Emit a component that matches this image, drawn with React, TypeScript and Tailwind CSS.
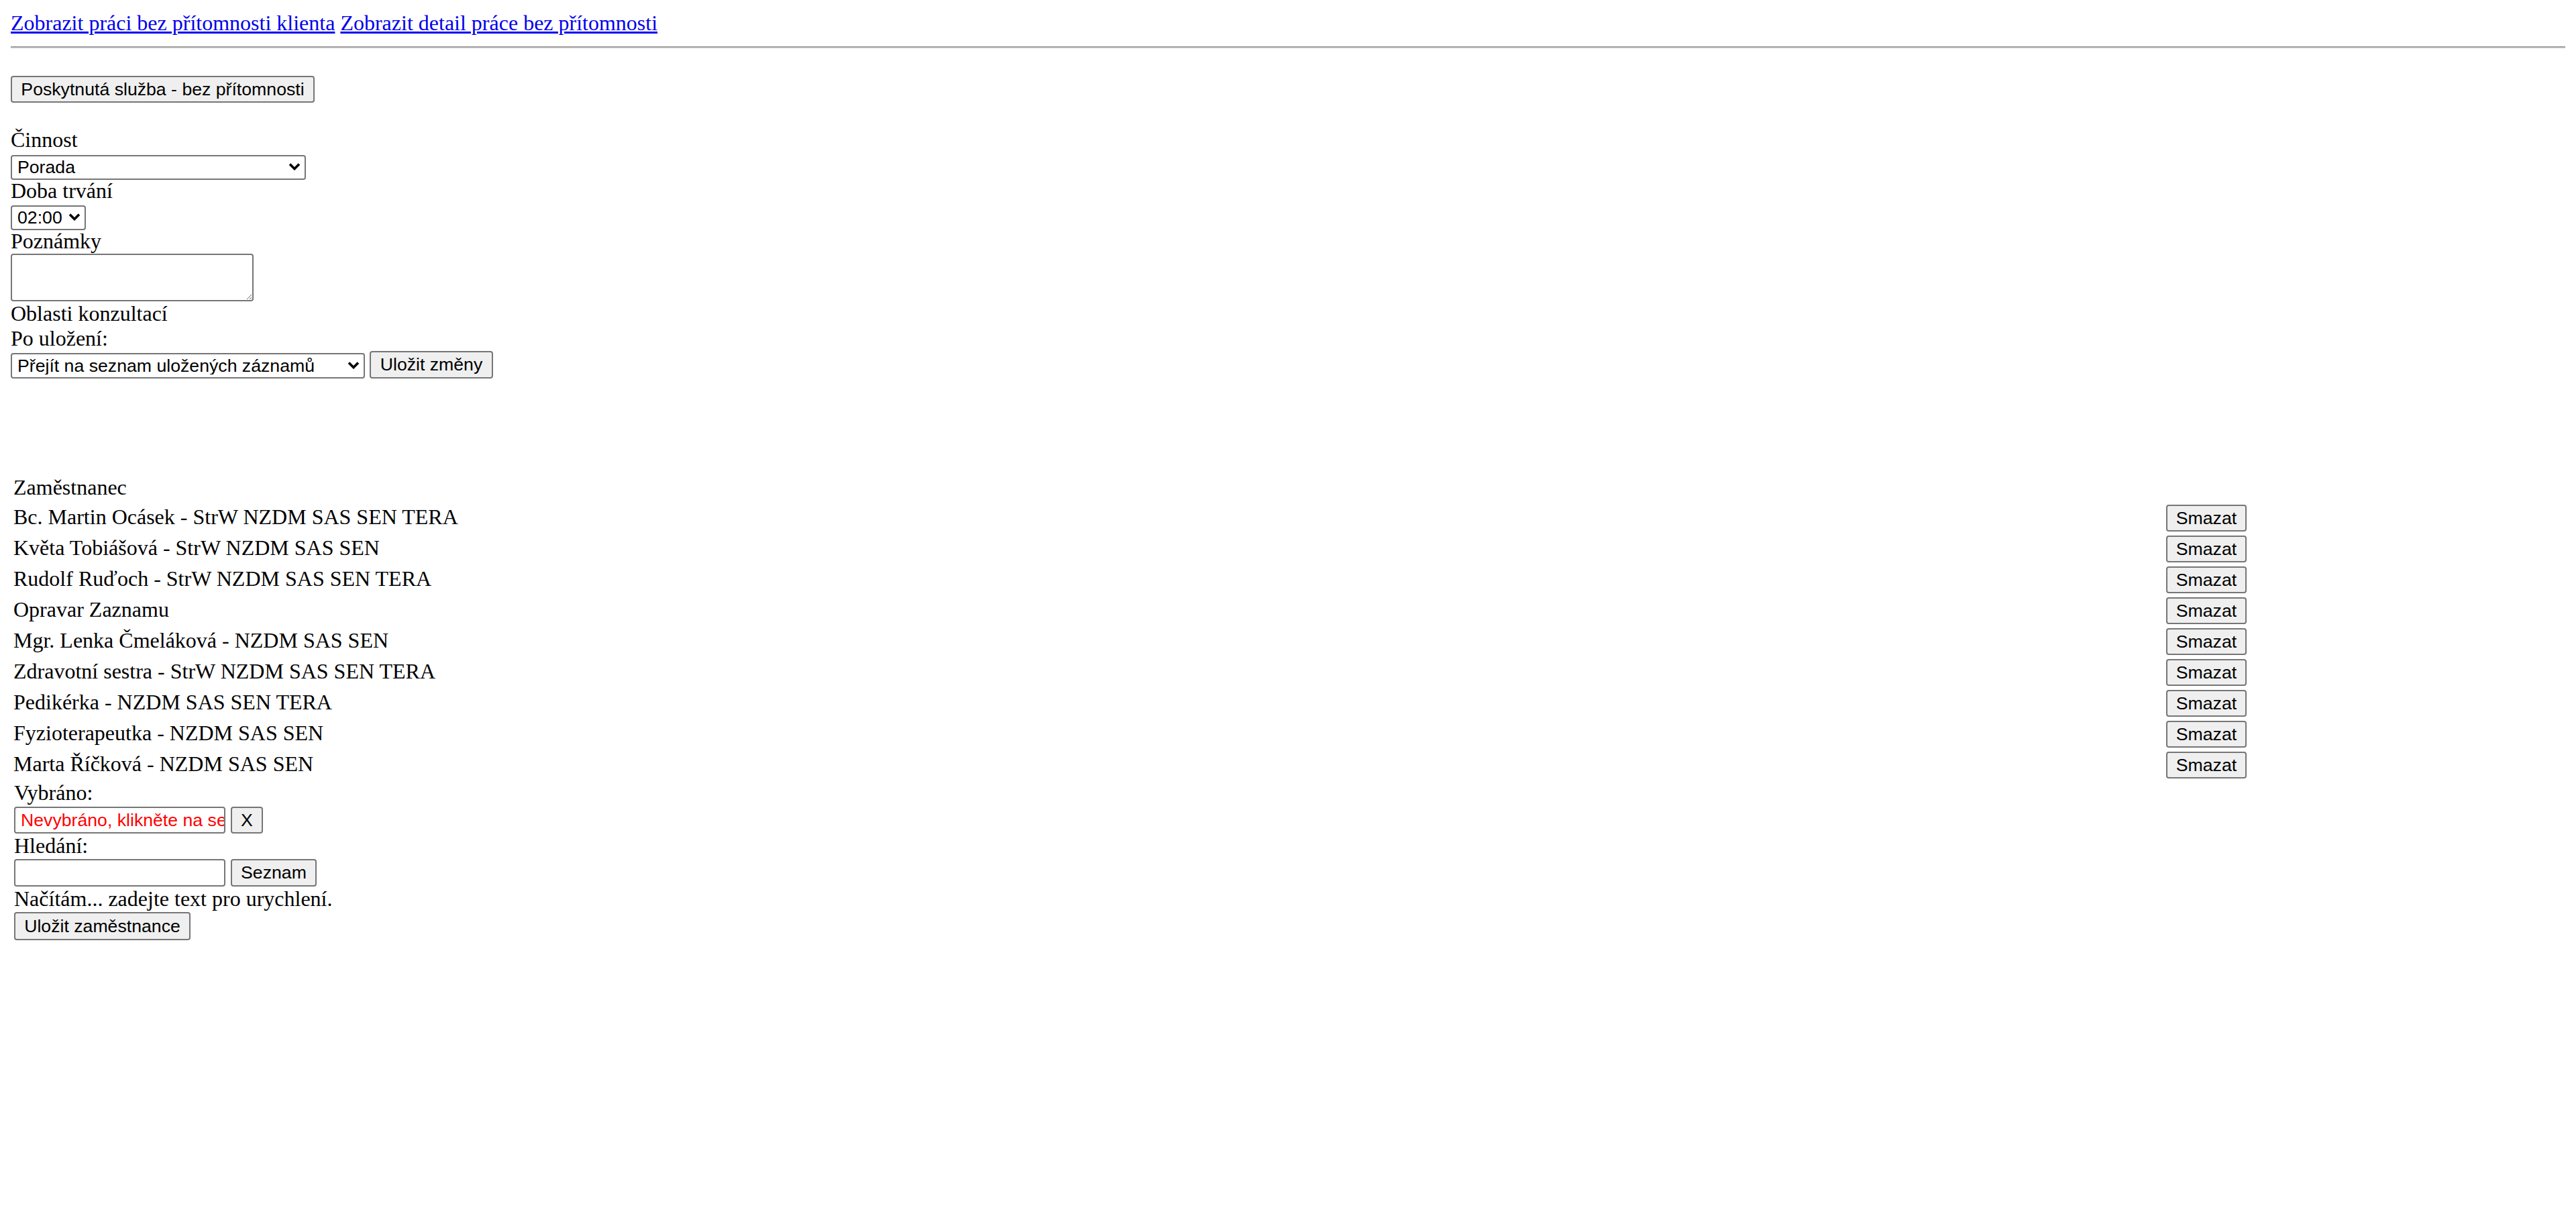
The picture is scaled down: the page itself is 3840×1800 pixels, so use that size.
import React from "react";

const employees = [
  "Bc. Martin Ocásek - StrW NZDM SAS SEN TERA",
  "Květa Tobiášová - StrW NZDM SAS SEN",
  "Rudolf Ruďoch - StrW NZDM SAS SEN TERA",
  "Opravar Zaznamu",
  "Mgr. Lenka Čmeláková - NZDM SAS SEN",
  "Zdravotní sestra - StrW NZDM SAS SEN TERA",
  "Pedikérka - NZDM SAS SEN TERA",
  "Fyzioterapeutka - NZDM SAS SEN",
  "Marta Říčková - NZDM SAS SEN",
];

const btn =
  "inline-flex items-center justify-center h-[40px] rounded-[4px] border-2 border-[#767676] bg-[#efefef] font-['Liberation_Sans',Arial,sans-serif] text-[26.667px] leading-none text-black";

const field =
  "rounded-[4px] border-2 border-[#767676] bg-white font-['Liberation_Sans',Arial,sans-serif] text-[26.667px] leading-none";

function Chevron() {
  return (
    <svg
      className="pointer-events-none absolute right-[8px] top-1/2 -translate-y-1/2"
      width="18"
      height="12"
      viewBox="0 0 18 12"
    >
      <polyline points="2,2.5 9,9.5 16,2.5" fill="none" stroke="#000" strokeWidth="3.6" />
    </svg>
  );
}

function Select({ value, w, h }: { value: string; w: string; h: string }) {
  return (
    <div className={`relative ${w} ${h}`}>
      <select
        className={`${field} appearance-none w-full h-full pl-[8px] pr-[30px] text-black`}
        defaultValue={value}
      >
        <option>{value}</option>
      </select>
      <Chevron />
    </div>
  );
}

export default function App() {
  return (
    <div className="min-h-[1800px] bg-white p-[16px] font-['Liberation_Serif','Times_New_Roman',serif] text-[32px] leading-[37px] text-black">
      <div className="h-[37px] whitespace-nowrap">
        <a href="#" className="text-[#0000ee] underline">Zobrazit práci bez přítomnosti klienta</a>{" "}
        <a href="#" className="text-[#0000ee] underline">Zobrazit detail práce bez přítomnosti</a>
      </div>
      <hr className="mt-[16px] border-t-2 border-b-2 border-t-[#9a9a9a] border-b-[#eeeeee]" />

      <div className="mt-[40px] flex flex-col items-start">
        <button className={`${btn} w-[453px]`}>Poskytnutá služba - bez přítomnosti</button>

        <div className="mt-[37px]">Činnost</div>
        <div className="mt-[2px]">
          <Select value="Porada" w="w-[440px]" h="h-[37px]" />
        </div>
        <div>Doba trvání</div>
        <div className="mt-[1px]">
          <Select value="02:00" w="w-[112px]" h="h-[37px]" />
        </div>
        <div>Poznámky</div>
        <textarea className="h-[71px] w-[362px] resize rounded-[4px] border-2 border-[#767676] bg-white" />
        <div>Oblasti konzultací</div>
        <div>Po uložení:</div>
        <div className="flex h-[41px] items-center gap-[7px]">
          <Select value="Přejít na seznam uložených záznamů" w="w-[528px]" h="h-[38px]" />
          <button className={`${btn} h-[41px] w-[184px]`}>Uložit změny</button>
        </div>
      </div>

      <div className="mt-[139px] w-[3338px] pl-[4px] pr-[5px]">
        <div className="flex h-[46px] items-center">Zaměstnanec</div>
        {employees.map((name) => (
          <div key={name} className="flex h-[46px] items-center justify-between">
            <span className="-mt-[3px]">{name}</span>
            <button className={`${btn} w-[120px]`}>Smazat</button>
          </div>
        ))}
        <div className="flex flex-col items-start pl-[1px]">
          <div>Vybráno:</div>
          <div className="mt-[2px] flex h-[40px] items-center gap-[8px]">
            <input
              readOnly
              value="Nevybráno, klikněte na seznam"
              className={`${field} h-[40px] w-[315px] pl-[8px] text-[#ff0000]`}
            />
            <button className={`${btn} w-[48px]`}>X</button>
          </div>
          <div>Hledání:</div>
          <div className="mt-[1px] flex h-[41px] items-center gap-[8px]">
            <input className={`${field} h-[41px] w-[315px] pl-[8px] text-black`} />
            <button className={`${btn} h-[41px] w-[128px]`}>Seznam</button>
          </div>
          <div>Načítám... zadejte text pro urychlení.</div>
          <button className={`${btn} mt-[1px] h-[42px] w-[263px]`}>Uložit zaměstnance</button>
        </div>
      </div>
    </div>
  );
}
